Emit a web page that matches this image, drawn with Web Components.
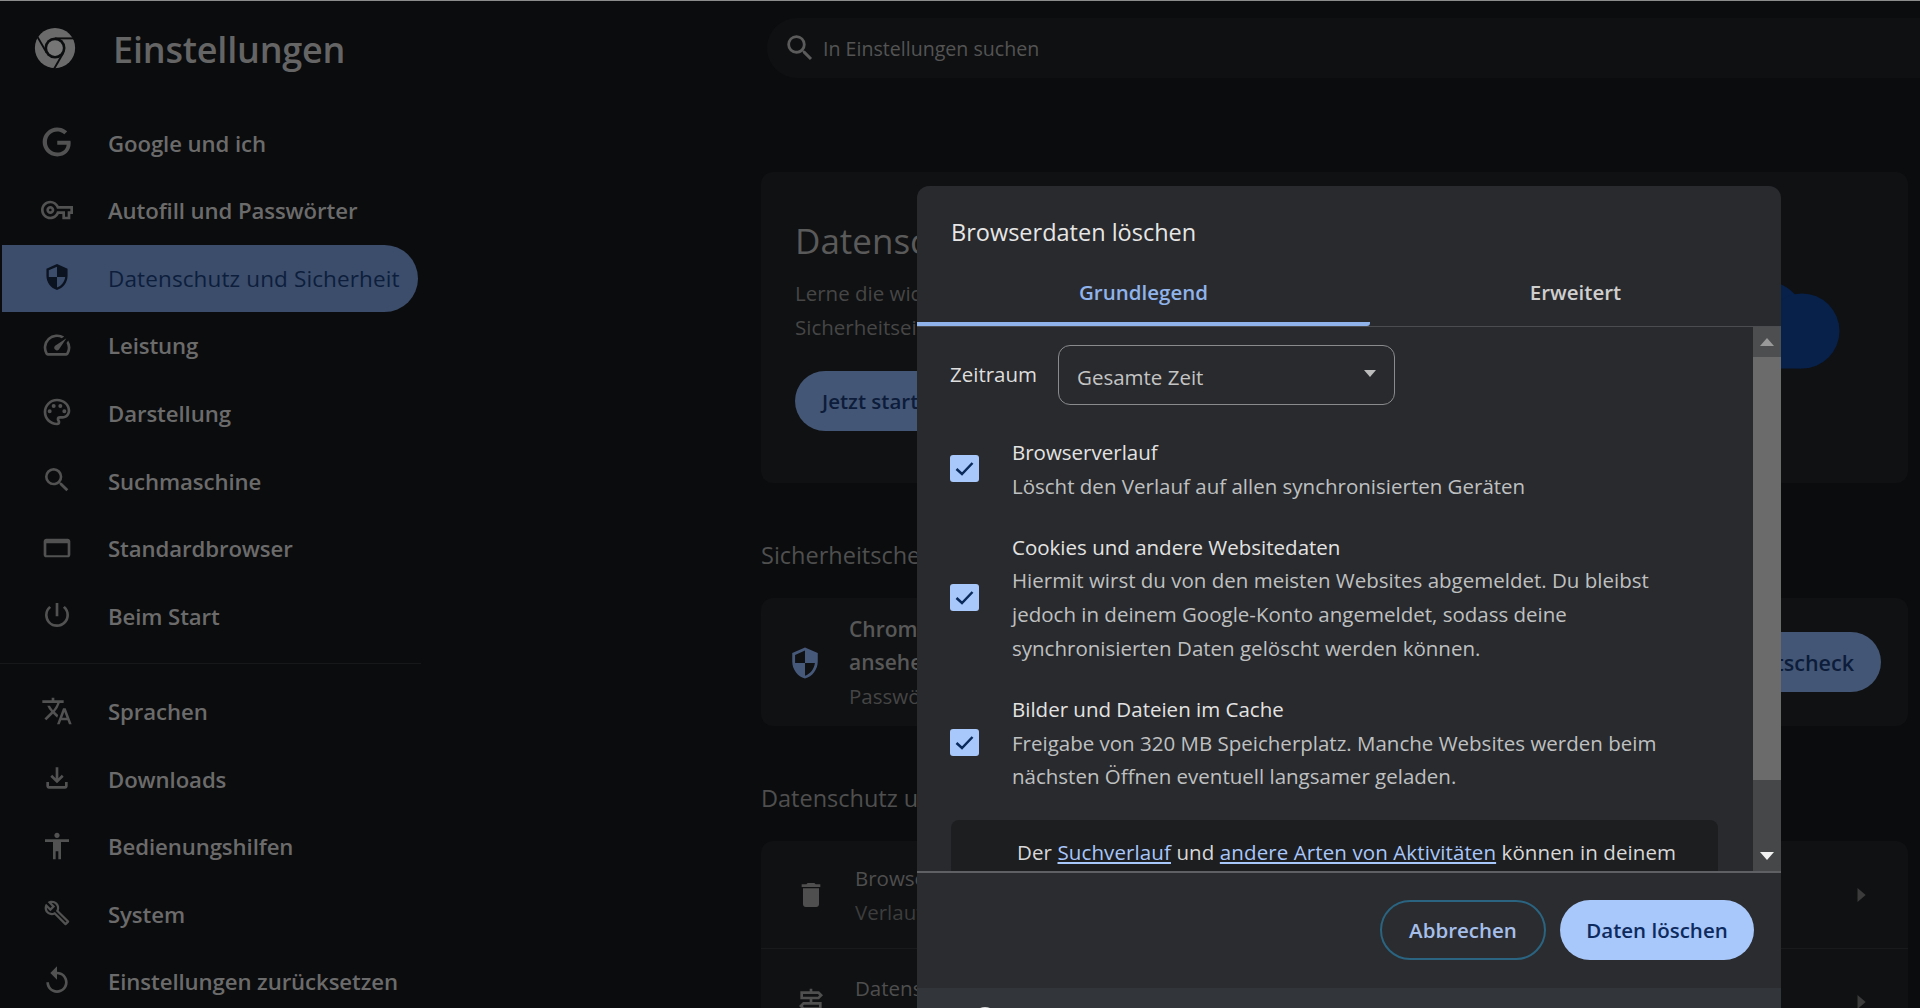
<!DOCTYPE html>
<html lang="de">
<head>
<meta charset="utf-8">
<title>Einstellungen</title>
<style>
  html, body { margin: 0; height: 100%; overflow: hidden; background: #0b0c0e; }
  body { font-family: "Open Sans", "Liberation Sans", sans-serif; color: #6e6e6e; }
</style>
</head>
<body>
<settings-page>
  <settings-nav slot="nav">
    <nav-item icon="google" scale="1.08">Google und ich</nav-item>
    <nav-item icon="key">Autofill und Passwörter</nav-item>
    <nav-item icon="shield" scale=".88" active>Datenschutz und Sicherheit</nav-item>
    <nav-item icon="speed">Leistung</nav-item>
    <nav-item icon="palette">Darstellung</nav-item>
    <nav-item icon="search">Suchmaschine</nav-item>
    <nav-item icon="browser">Standardbrowser</nav-item>
    <nav-item icon="power">Beim Start</nav-item>
    <nav-rule></nav-rule>
    <nav-item icon="translate">Sprachen</nav-item>
    <nav-item icon="download">Downloads</nav-item>
    <nav-item icon="accessibility">Bedienungshilfen</nav-item>
    <nav-item icon="build" scale=".84">System</nav-item>
    <nav-item icon="restore">Einstellungen zurücksetzen</nav-item>
  </settings-nav>

  <search-field slot="main">In Einstellungen suchen</search-field>
  <guide-card slot="main"></guide-card>
  <section-label slot="main">Sicherheitscheck</section-label>
  <check-card slot="main"></check-card>
  <section-label slot="main">Datenschutz und Sicherheit</section-label>
  <privacy-list slot="main"></privacy-list>
</settings-page>

<clear-dialog>
  <data-row title-text="Browserverlauf">Löscht den Verlauf auf allen synchronisierten Geräten</data-row>
  <data-row title-text="Cookies und andere Websitedaten">Hiermit wirst du von den meisten Websites abgemeldet. Du bleibst<br>jedoch in deinem Google-Konto angemeldet, sodass deine<br>synchronisierten Daten gelöscht werden können.</data-row>
  <data-row title-text="Bilder und Dateien im Cache">Freigabe von 320 MB Speicherplatz. Manche Websites werden beim<br>nächsten Öffnen eventuell langsamer geladen.</data-row>
</clear-dialog>

<script>
'use strict';

const ICONS = {
  google: 'M21.35 11.1h-9.17v2.73h6.51c-.33 3.81-3.5 5.44-6.5 5.44C8.36 19.27 5 16.25 5 12c0-4.1 3.2-7.27 7.2-7.27 3.09 0 4.9 1.97 4.9 1.97L19 4.72S16.56 2 12.1 2C6.42 2 2.03 6.8 2.03 12c0 5.05 4.13 10 10.22 10 5.35 0 9.25-3.67 9.25-9.09 0-1.15-.15-1.81-.15-1.81z',
  key: 'M22 19h-6v-4h-2.68c-1.14 2.42-3.6 4-6.32 4-3.86 0-7-3.14-7-7s3.14-7 7-7c2.72 0 5.17 1.58 6.32 4H24v6h-2v4zm-4-2h2v-4h2v-2H11.94l-.23-.67C11.01 8.34 9.11 7 7 7c-2.76 0-5 2.24-5 5s2.24 5 5 5c2.11 0 4.01-1.34 4.71-3.33l.23-.67H18v4zM7 15c-1.65 0-3-1.35-3-3s1.35-3 3-3 3 1.35 3 3-1.35 3-3 3zm0-4c-.55 0-1 .45-1 1s.45 1 1 1 1-.45 1-1-.45-1-1-1z',
  shield: 'M12 1L3 5v6c0 5.55 3.84 10.74 9 12 5.16-1.26 9-6.45 9-12V5l-9-4zm0 10.99h7c-.53 4.12-3.28 7.79-7 8.94V12H5V6.3l7-3.11v8.8z',
  speed: 'M20.38 8.57l-1.23 1.85a8 8 0 0 1-.22 7.58H5.07A8 8 0 0 1 15.58 6.85l1.85-1.23A10 10 0 0 0 3.35 19a2 2 0 0 0 1.72 1h13.85a2 2 0 0 0 1.74-1 10 10 0 0 0-.27-10.44zm-9.79 6.84a2 2 0 0 0 2.83 0l5.66-8.49-8.49 5.66a2 2 0 0 0 0 2.83z',
  palette: 'M12 22C6.49 22 2 17.51 2 12S6.49 2 12 2s10 4.04 10 9c0 3.31-2.69 6-6 6h-1.77c-.28 0-.5.22-.5.5 0 .12.05.23.13.33.41.47.64 1.06.64 1.67A2.5 2.5 0 0 1 12 22zm0-18c-4.41 0-8 3.59-8 8s3.59 8 8 8c.28 0 .5-.22.5-.5a.54.54 0 0 0-.14-.35c-.41-.46-.63-1.05-.63-1.65a2.5 2.5 0 0 1 2.5-2.5H16c2.21 0 4-1.79 4-4 0-3.86-3.59-7-8-7zM6.5 10a1.5 1.5 0 1 1 0 3 1.5 1.5 0 0 1 0-3zm3-4a1.5 1.5 0 1 1 0 3 1.5 1.5 0 0 1 0-3zm5 0a1.5 1.5 0 1 1 0 3 1.5 1.5 0 0 1 0-3zm3 4a1.5 1.5 0 1 1 0 3 1.5 1.5 0 0 1 0-3z',
  search: 'M15.5 14h-.79l-.28-.27A6.471 6.471 0 0 0 16 9.5 6.5 6.5 0 1 0 9.5 16c1.61 0 3.09-.59 4.23-1.57l.27.28v.79l5 4.99L20.49 19l-4.99-5zm-6 0C7.01 14 5 11.99 5 9.5S7.01 5 9.5 5 14 7.01 14 9.5 11.99 14 9.5 14z',
  browser: 'M4 5h16c1.1 0 2 .9 2 2v10c0 1.1-.9 2-2 2H4c-1.1 0-2-.9-2-2V7c0-1.1.9-2 2-2zm0 3.5V17.4h16V8.5H4z',
  power: 'M13 3h-2v10h2V3zm4.83 2.17l-1.42 1.42A6.92 6.92 0 0 1 19 12c0 3.87-3.13 7-7 7A6.995 6.995 0 0 1 7.58 6.58L6.17 5.17A8.932 8.932 0 0 0 3 12a9 9 0 0 0 18 0c0-2.74-1.23-5.18-3.17-6.83z',
  translate: 'M12.87 15.07l-2.54-2.51.03-.03A17.52 17.52 0 0 0 14.07 6H17V4h-7V2H8v2H1v1.99h11.17C11.5 7.92 10.44 9.75 9 11.35 8.07 10.32 7.3 9.19 6.69 8h-2c.73 1.63 1.73 3.17 2.98 4.56l-5.09 5.02L4 19l5-5 3.11 3.11.76-2.04zM18.5 10h-2L12 22h2l1.12-3h4.75L21 22h2l-4.5-12zm-2.62 7l1.62-4.33L19.12 17h-3.24z',
  download: 'M18 15v3H6v-3H4v3c0 1.1.9 2 2 2h12c1.1 0 2-.9 2-2v-3h-2zm-1-4l-1.41-1.41L13 12.17V4h-2v8.17L8.41 9.59 7 11l5 5 5-5z',
  accessibility: 'M12 2c1.1 0 2 .9 2 2s-.9 2-2 2-2-.9-2-2 .9-2 2-2zm9 7h-6v13h-2v-6h-2v6H9V9H3V7h18v2z',
  build: 'M22.61 18.99l-9.08-9.08c.93-2.34.45-5.1-1.44-7C9.79.61 6.21.4 3.66 2.26L7.5 6.11 6.08 7.52 2.25 3.69C.39 6.23.6 9.82 2.9 12.11c1.86 1.86 4.57 2.35 6.89 1.48l9.11 9.11c.39.39 1.02.39 1.41 0l2.3-2.3c.4-.38.4-1.01 0-1.41zm-3 1.6l-9.46-9.46c-.61.45-1.29.72-2 .82-1.36.2-2.79-.21-3.83-1.25C3.37 9.76 2.93 8.5 3 7.26l3.09 3.09 4.24-4.24-3.09-3.09c1.24-.07 2.49.37 3.44 1.31 1.08 1.08 1.49 2.57 1.24 3.96-.12.71-.42 1.37-.88 1.96l9.45 9.45-.88.88z',
  restore: 'M12 5V1L7 6l5 5V7c3.31 0 6 2.69 6 6s-2.69 6-6 6-6-2.69-6-6H4c0 4.42 3.58 8 8 8s8-3.58 8-8-3.58-8-8-8z',
  trash: 'M6 19c0 1.1.9 2 2 2h8c1.1 0 2-.9 2-2V7H6v12zM19 4h-3.5l-1-1h-5l-1 1H5v2h14V4z',
  signpost: 'M13 10h5l3-3-3-3h-5V2h-2v2H4v6h7v2H6l-3 3 3 3h5v4h2v-4h7v-6h-7v-2zM6 6h11.17l1 1-1 1H6V6zm12 8v2H6.83l-1-1 1-1H18z',
  chevron: 'M9 6l7 6-7 6z'
};

customElements.define(
  'app-icon',
  class AppIcon extends HTMLElement {
    connectedCallback() {
      const size = this.getAttribute('size') || 32;
      const root = this.attachShadow({ mode: 'open' });
      root.innerHTML = `
      <style>
      :host { display: inline-flex; flex: none; width: ${size}px; height: ${size}px; }
      svg { width: 100%; height: 100%; fill: currentColor; display: block; }
      </style>
      <svg viewBox="0 0 24 24"><path d="${ICONS[this.getAttribute('name')]}"/></svg>`;
    }
  }
);

customElements.define(
  'settings-page',
  class SettingsPage extends HTMLElement {
    constructor() {
      super();
      this.attachShadow({ mode: 'open' }).innerHTML = `
      <style>
      :host { display: grid; grid-template-columns: 761px 1fr; height: 1008px; overflow: hidden;
        border-top: 1px solid #8c8c8c; box-sizing: border-box; background: #0b0c0e; }
      main { display: flex; flex-direction: column; padding: 17px 12px 0 0; min-width: 0; }
      </style>
      <slot name="nav"></slot>
      <main><slot name="main"></slot></main>`;
    }
  }
);

customElements.define(
  'settings-nav',
  class SettingsNav extends HTMLElement {
    constructor() {
      super();
      this.attachShadow({ mode: 'open' }).innerHTML = `
      <style>
      :host { display: block; width: 421px; }
      header { display: flex; align-items: center; height: 108.5px; box-sizing: border-box; padding: 0 0 14px 34px; }
      svg { width: 42px; height: 42px; flex: none; }
      h1 { margin: 2px 0 0 37px; font-size: 36px; font-weight: 600; color: #656565; letter-spacing: -.2px; }
      </style>
      <header>
        <svg viewBox="0 0 48 48">
          <circle cx="24" cy="24" r="23" fill="#6b6b6b"/>
          <g stroke="#0c0d0f" stroke-width="2.2">
            <path d="M24 13H46"/>
            <path d="M24 13H46" transform="rotate(120 24 24)"/>
            <path d="M24 13H46" transform="rotate(240 24 24)"/>
          </g>
          <circle cx="24" cy="24" r="12" fill="#0c0d0f"/>
          <circle cx="24" cy="24" r="9" fill="#767676"/>
        </svg>
        <h1>Einstellungen</h1>
      </header>
      <slot></slot>`;
    }
  }
);

customElements.define(
  'nav-item',
  class NavItem extends HTMLElement {
    connectedCallback() {
      const scale = this.getAttribute('scale') || 1;
      const root = this.attachShadow({ mode: 'open' });
      root.innerHTML = `
      <style>
      :host { display: flex; align-items: center; height: 67.55px; margin-left: 2px; width: 416px;
        font-size: 22.2px; font-weight: 600; color: #6b6b6b; letter-spacing: -.1px; box-sizing: border-box; padding-left: 39px; }
      :host([active]) { background: #3b4d6b; color: #0d1e3c; border-radius: 0 34px 34px 0; font-weight: 500; font-size: 22.5px; letter-spacing: .12px; }
      app-icon { color: #525252; margin-right: 35px; position: relative; top: -1px; transform: scale(${scale}); }
      :host([active]) app-icon { color: #0b1220; }
      </style>
      <app-icon name="${this.getAttribute('icon')}"></app-icon><slot></slot>`;
    }
  }
);

customElements.define(
  'nav-rule',
  class NavRule extends HTMLElement {
    constructor() {
      super();
      this.attachShadow({ mode: 'open' }).innerHTML = `
      <style>:host { display: block; height: 1px; background: #17181a; margin: 13px 0 14px; width: 421px; }</style>`;
    }
  }
);

customElements.define(
  'search-field',
  class SearchField extends HTMLElement {
    constructor() {
      super();
      this.attachShadow({ mode: 'open' }).innerHTML = `
      <style>
      :host { display: flex; align-items: center; height: 60px; margin-left: 6px; margin-right: -12px;
        background: #0f1012; border-radius: 30px 0 0 30px; color: #545454; font-size: 19.6px; flex: none; }
      app-icon { margin: 0 6px 0 16px; color: #5b5b5b; }
      </style>
      <app-icon name="search" size="34"></app-icon><slot></slot>`;
    }
  }
);

const CARD_STYLE = `
  :host { display: block; background: #101113; border-radius: 12px; box-sizing: border-box; flex: none; overflow: hidden; position: relative; }
  .pill { display: inline-flex; align-items: center; height: 60px; border-radius: 30px; background: #435675;
    color: #0c1c3a; font-size: 21.5px; font-weight: 600; white-space: nowrap; }
`;

customElements.define(
  'guide-card',
  class GuideCard extends HTMLElement {
    constructor() {
      super();
      this.attachShadow({ mode: 'open' }).innerHTML = `
      <style>${CARD_STYLE}
      :host { height: 311px; margin-top: 94px; padding: 42px 0 0 34px; }
      h2 { margin: 0; font-size: 35px; font-weight: 400; line-height: 54px; color: #5a5a5a; }
      p { margin: 0; color: #464646; font-size: 20.5px; line-height: 33.5px; padding-top: 9px; padding-bottom: 1px; }
      .pill { margin-top: 26px; padding: 0 27px; font-size: 20.5px; }
      svg { position: absolute; left: 980px; top: 100px; width: 120px; height: 110px; fill: #07214a; }
      </style>
      <h2>Datenschutzleitfaden</h2>
      <p>Lerne die wichtigsten<br>Sicherheitseinstellungen</p>
      <div class="pill">Jetzt starten</div>
      <svg viewBox="0 0 120 110"><circle cx="21" cy="53" r="45"/><circle cx="61" cy="59" r="37.5"/><path d="M10 60h50v36.500H10z"/></svg>`;
    }
  }
);

customElements.define(
  'section-label',
  class SectionLabel extends HTMLElement {
    constructor() {
      super();
      this.attachShadow({ mode: 'open' }).innerHTML = `
      <style>:host { display: block; height: 115px; box-sizing: border-box; padding-top: 55px; flex: none;
        font-size: 23.5px; line-height: 34px; color: #4f4f4f; white-space: nowrap; }</style>
      <slot></slot>`;
    }
  }
);

customElements.define(
  'check-card',
  class CheckCard extends HTMLElement {
    constructor() {
      super();
      this.attachShadow({ mode: 'open' }).innerHTML = `
      <style>${CARD_STYLE}
      :host { display: flex; align-items: center; height: 128px; padding: 2px 27px 0 27px; }
      app-icon { color: #47597a; margin-left: 0; margin-right: 27px; }
      .t { font-size: 21px; line-height: 33.6px; color: #585858; font-weight: 600; }
      .s { font-size: 20.5px; line-height: 33.6px; color: #454545; }
      .pill { margin-left: auto; padding: 0 27px; margin-top: -2px; }
      </style>
      <app-icon name="shield" size="34"></app-icon>
      <div><div class="t">Chrome</div><div class="t">ansehen</div><div class="s">Passwörter</div></div>
      <div class="pill">Sicherheitscheck</div>`;
    }
  }
);

customElements.define(
  'privacy-list',
  class PrivacyList extends HTMLElement {
    constructor() {
      super();
      this.attachShadow({ mode: 'open' }).innerHTML = `
      <style>${CARD_STYLE}
      :host { height: 200px; }
      .row { display: flex; align-items: center; height: 108px; padding: 0 5px 0 34px; box-sizing: border-box;
        border-bottom: 1px solid #191a1c; }
      .row.next { align-items: flex-start; padding-top: 22px; border-bottom: 0; }
      .row.next app-icon { margin-top: 15px; }
      .row.next .c { margin-top: 17px; }
      app-icon { color: #4f4f4f; margin-right: 28px; }
      .t { font-size: 20.5px; line-height: 34px; color: #4e4e4e; }
      .s { font-size: 20.5px; line-height: 34px; color: #3d3d3d; }
      .c { margin-left: auto; color: #3b3b3b; }
      </style>
      <div class="row">
        <app-icon name="trash" size="32"></app-icon>
        <div><div class="t">Browserdaten</div><div class="s">Verlauf</div></div>
        <app-icon class="c" name="chevron" size="28"></app-icon>
      </div>
      <div class="row next">
        <app-icon name="signpost" size="32"></app-icon>
        <div class="t">Datenschutz</div>
        <app-icon class="c" name="chevron" size="28"></app-icon>
      </div>`;
    }
  }
);

customElements.define(
  'data-row',
  class DataRow extends HTMLElement {
    connectedCallback() {
      const root = this.attachShadow({ mode: 'open' });
      root.innerHTML = `
      <style>
      :host { display: flex; align-items: center; margin-top: 27px; font-size: 20.5px; line-height: 33.8px; color: #bfc0c1; }
      .box { flex: none; width: 29px; height: 27px; background: #a8c7fa; border-radius: 3px; margin: -2px 33px 0 -1px; }
      svg { display: block; width: 100%; height: 100%; fill: none; stroke: #0b2a5c; stroke-width: 2.5; }
      .title { color: #e3e3e3; }
      </style>
      <div class="box"><svg viewBox="0 0 29 27"><path d="M6.500 14l5.500 5L22.500 8"/></svg></div>
      <div><div class="title">${this.getAttribute('title-text')}</div><slot></slot></div>`;
    }
  }
);

customElements.define(
  'clear-dialog',
  class ClearDialog extends HTMLElement {
    constructor() {
      super();
      this.attachShadow({ mode: 'open' }).innerHTML = `
      <style>
      :host { position: absolute; left: 917px; top: 186px; width: 864px; height: 822px; display: flex; flex-direction: column;
        background: #292a2d; border-radius: 12px 12px 0 0; overflow: hidden; color: #bfc0c1; font-size: 20.5px; }
      h2 { margin: 0; height: 84px; box-sizing: border-box; padding: 28px 0 0 34px; font-size: 23.5px; line-height: 36px; font-weight: 400; color: #e6e6e6; }
      .tabs { display: grid; grid-template-columns: 453px 1fr; height: 56px; border-bottom: 1px solid #4a4c50; flex: none; }
      .tab { display: flex; align-items: center; justify-content: center; font-size: 20.5px; font-weight: 600; color: #cfcfcf; padding-bottom: 12px; box-sizing: border-box; }
      .tab.on { color: #8fb3ea; border-bottom: 4px solid #8fb3ea; border-radius: 0 0 3px 0; padding-bottom: 8px; height: 56px; }
      .body { flex: none; height: 544px; display: grid; grid-template-columns: 1fr 28px; grid-template-rows: 544px; overflow: hidden; }
      .content { padding: 18px 35px 0 34px; min-width: 0; overflow: hidden; }
      .range { display: flex; align-items: center; height: 60px; }
      .range span { width: 107px; color: #dedede; font-size: 20.5px; position: relative; top: -1px; margin-right: 1px; margin-left: -1px; }
      .select { width: 337px; height: 60px; box-sizing: border-box; border: 1.5px solid #8a8b8d; border-radius: 12px;
        display: flex; align-items: center; justify-content: space-between; padding: 3px 18px 0 18px; color: #c4c4c4; }
      .select svg { width: 12px; height: 7px; fill: #bdbdbd; margin-top: -6px; }
      .spacer { height: 4px; }
      .note { margin-top: 26px; height: 60px; background: #1d1e20; border-radius: 8px 8px 0 0; padding: 14px 0 0 66px; line-height: 36px; color: #d8d8d8; white-space: nowrap; box-sizing: border-box; letter-spacing: .1px; }
      .note a { color: #a8c7fa; text-decoration: underline; }
      .bar { background: #464749; display: flex; flex-direction: column; }
      .bar .up { height: 30px; background: #4d4e50; display: flex; justify-content: center; align-items: center; }
      .bar .thumb { height: 423px; background: #6b6b6b; }
      .bar .down { margin-top: auto; height: 30px; display: flex; justify-content: center; align-items: center; }
      .bar svg { width: 14px; height: 8px; }
      .foot { flex: none; height: 117px; border-top: 2px solid #5f6063; box-sizing: border-box; display: flex; justify-content: flex-end; align-items: flex-start; gap: 14px; padding: 27px 27px 0 0; background: #2a2c2f; }
      .btn { height: 60px; border-radius: 30px; display: flex; align-items: center; justify-content: center; font-size: 20.5px; font-weight: 600; box-sizing: border-box; }
      .ghost { width: 166px; border: 2px solid #2a6481; color: #a6bfea; }
      .solid { width: 194px; background: #a8c7fa; color: #0d2b5e; }
      .login { flex: 1; background: #32353a; position: relative; }
      .login i { position: absolute; left: 56px; top: 19px; width: 24px; height: 24px; border-radius: 50%; background: #d8d8d8; }
      </style>
      <h2>Browserdaten löschen</h2>
      <div class="tabs"><div class="tab on">Grundlegend</div><div class="tab">Erweitert</div></div>
      <div class="body">
        <div class="content">
          <div class="range"><span>Zeitraum</span>
            <div class="select">Gesamte Zeit<svg viewBox="0 0 12 7"><path d="M0 0h12L6 7z"/></svg></div>
          </div>
          <div class="spacer"></div>
          <slot></slot>
          <div class="note">Der <a>Suchverlauf</a> und <a>andere Arten von Aktivitäten</a> können in deinem</div>
        </div>
        <div class="bar">
          <div class="up"><svg viewBox="0 0 14 8" fill="#9a9a9a"><path d="M7 0l7 8H0z"/></svg></div>
          <div class="thumb"></div>
          <div class="down"><svg viewBox="0 0 14 8" fill="#f2f2f2"><path d="M0 0h14L7 8z"/></svg></div>
        </div>
      </div>
      <div class="foot"><div class="btn ghost">Abbrechen</div><div class="btn solid">Daten löschen</div></div>
      <div class="login"><i></i></div>`;
    }
  }
);
</script>
</body>
</html>
